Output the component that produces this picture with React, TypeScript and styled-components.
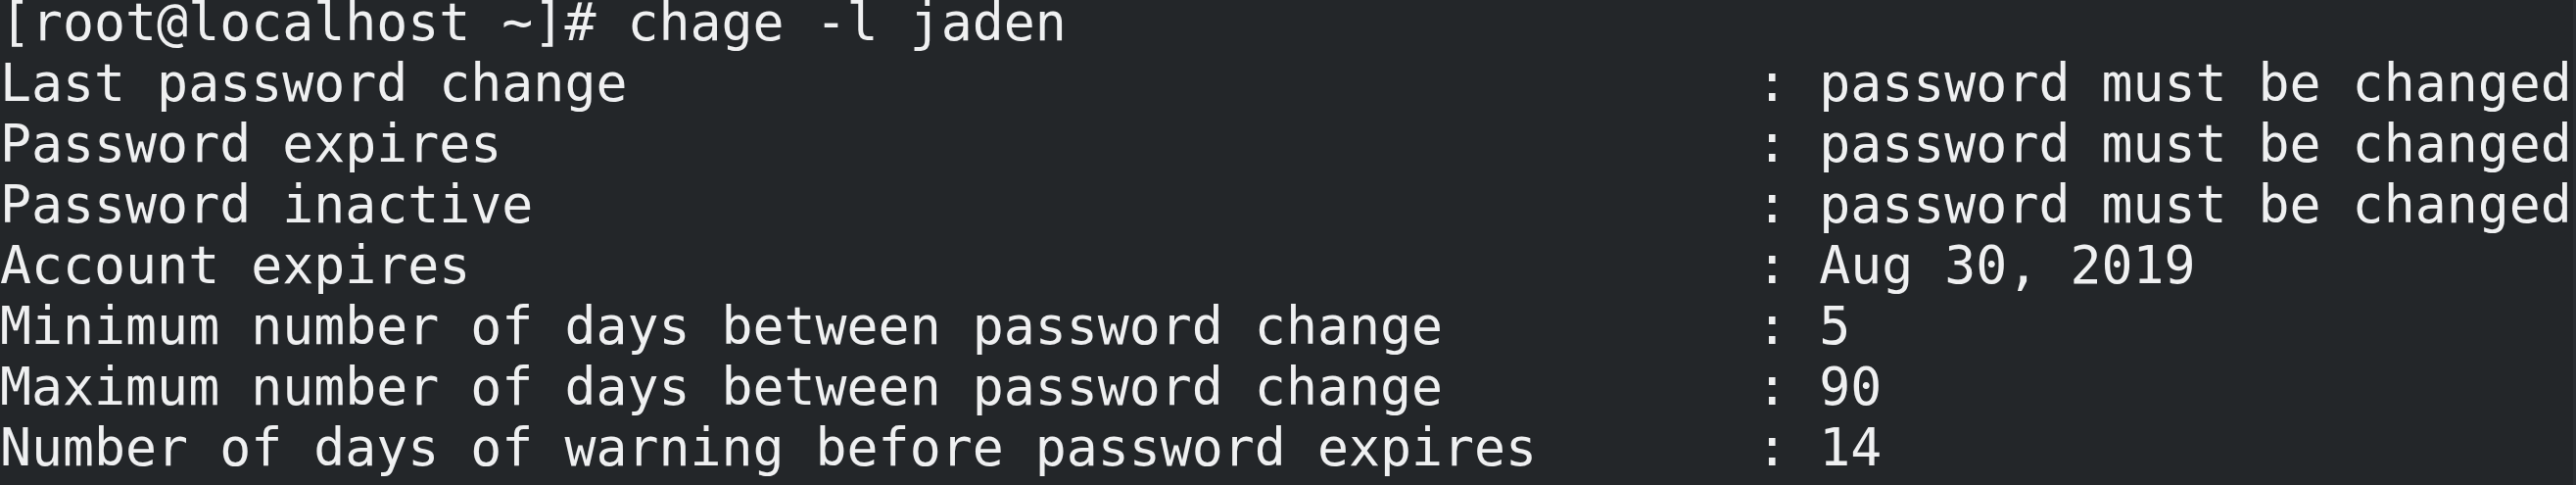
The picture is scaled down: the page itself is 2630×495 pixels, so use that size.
import React from "react";
import styled, { createGlobalStyle } from "styled-components";

const Global = createGlobalStyle`
  html, body { margin: 0; padding: 0; background: #232629; }
  body { width: 2630px; height: 495px; overflow: hidden; }
`;

const Window = styled.div`
  display: flex;
  width: 2630px;
  height: 495px;
  background: #232629;
  overflow: hidden;
`;

const Screen = styled.div`
  flex: 1;
  overflow: hidden;
`;

const Lines = styled.pre`
  margin: -8.4px 0 0 0;
  padding: 0;
  font-family: "DejaVu Sans Mono", "Liberation Mono", monospace;
  font-size: 53.2px;
  line-height: 62px;
  color: #eff0f1;
  white-space: pre;
`;

const Line = styled.div`
  height: 62px;
`;

const ScrollStrip = styled.div`
  width: 3px;
  background: #2a2e32;
`;

const prompt = "[root@localhost ~]# chage -l jaden";

const rows: [string, string][] = [
  ["Last password change", "password must be changed"],
  ["Password expires", "password must be changed"],
  ["Password inactive", "password must be changed"],
  ["Account expires", "Aug 30, 2019"],
  ["Minimum number of days between password change", "5"],
  ["Maximum number of days between password change", "90"],
  ["Number of days of warning before password expires", "14"],
];

export default function App() {
  return (
    <>
      <Global />
      <Window>
        <Screen>
          <Lines>
            <Line>{prompt}</Line>
            {rows.map(([label, value]) => (
              <Line key={label}>{label.padEnd(56, " ") + ": " + value}</Line>
            ))}
          </Lines>
        </Screen>
        <ScrollStrip />
      </Window>
    </>
  );
}
